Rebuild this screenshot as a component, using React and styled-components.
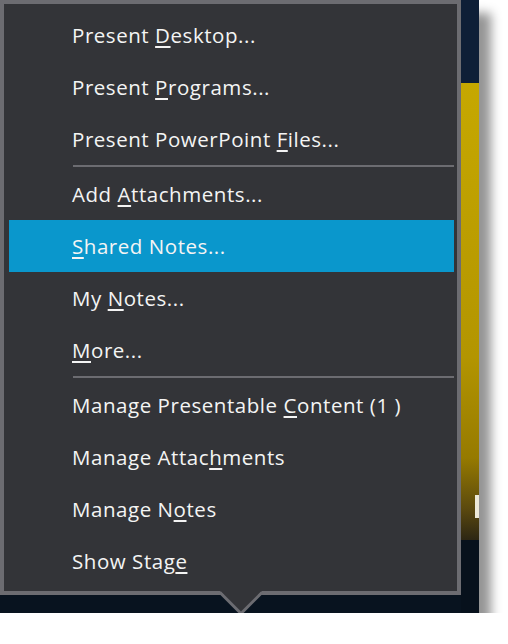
import React from "react";
import styled, { createGlobalStyle } from "styled-components";

const Global = createGlobalStyle`
  html, body { margin: 0; padding: 0; background: #ffffff; }
  body { font-family: "Open Sans", "Noto Sans", sans-serif; }
`;

const Backdrop = styled.div`
  display: flex;
  align-items: flex-start;
  width: 479px;
  height: 613px;
  background: #08131f;
  box-shadow: 12px 13px 10px rgba(0, 0, 0, 0.42);
`;

const Panel = styled.div`
  position: relative;
  box-sizing: border-box;
  width: 461px;
  height: 595px;
  border: 4px solid #6c6c71;
  background: #333438;
  padding: 5px 3px 4px 5px;
  display: flex;
  flex-direction: column;
`;

const Item = styled.div`
  display: flex;
  align-items: center;
  height: 52px;
  flex: none;
  padding-left: 63px;
  font-family: "Open Sans", "Noto Sans", sans-serif;
  font-size: 20.5px;
  font-weight: 500;
  letter-spacing: 0.55px;
  color: #f4f4f4;
  background: ${(p) => (p.$active ? "#0a97cc" : "transparent")};
  white-space: pre;
`;

const Key = styled.span`
  text-decoration: underline;
  text-decoration-thickness: 2px;
  text-underline-offset: 3px;
`;

const Separator = styled.div`
  flex: none;
  height: 3px;
  &::before {
    content: "";
    display: block;
    margin-left: 64px;
    height: 2px;
    background: #6c6c71;
  }
`;

const Pointer = styled.svg`
  position: absolute;
  left: 214px;
  top: 587px;
  display: block;
`;

const Strip = styled.div`
  width: 18px;
  height: 100%;
  display: flex;
  flex-direction: column;
  background: #0b1a2e;
`;

const StripTop = styled.div`
  height: 83px;
  flex: none;
  background: #0e1f37;
`;

const StripGold = styled.div`
  height: 457px;
  flex: none;
  display: flex;
  flex-direction: column;
  justify-content: flex-end;
  align-items: flex-end;
  padding-bottom: 22px;
  box-sizing: border-box;
  background: linear-gradient(
    to bottom,
    #c6a800 0%,
    #b39500 60%,
    #967a00 82%,
    #5c4a0e 93%,
    #2c2614 100%
  );
`;

const Glyph = styled.div`
  width: 4px;
  height: 23px;
  background: #ece8d8;
`;

const StripBottom = styled.div`
  flex: 1;
  background: #07111c;
`;

const Label = ({ text, k }) => (
  <span>
    {text.slice(0, k)}
    <Key>{text[k]}</Key>
    {text.slice(k + 1)}
  </span>
);

const groups = [
  [
    { text: "Present Desktop...", k: 8 },
    { text: "Present Programs...", k: 8 },
    { text: "Present PowerPoint Files...", k: 19 },
  ],
  [
    { text: "Add Attachments...", k: 4 },
    { text: "Shared Notes...", k: 0, active: true },
    { text: "My Notes...", k: 3 },
    { text: "More...", k: 0 },
  ],
  [
    { text: "Manage Presentable Content (1 )", k: 19 },
    { text: "Manage Attachments", k: 12 },
    { text: "Manage Notes", k: 8 },
    { text: "Show Stage", k: 9 },
  ],
];

export default function App() {
  return (
    <>
      <Global />
      <Backdrop>
        <Panel>
          {groups.map((g, gi) => (
            <React.Fragment key={gi}>
              {gi > 0 && <Separator />}
              {g.map((it) => (
                <Item key={it.text} $active={it.active}>
                  <Label text={it.text} k={it.k} />
                </Item>
              ))}
            </React.Fragment>
          ))}
          <Pointer width="46" height="26" viewBox="0 0 46 26">
            <polygon points="2,0 44,0 23,21" fill="#333438" />
            <polyline
              points="2,1.5 23,22.5 44,1.5"
              fill="none"
              stroke="#6c6c71"
              strokeWidth="3"
            />
          </Pointer>
        </Panel>
        <Strip>
          <StripTop />
          <StripGold>
            <Glyph />
          </StripGold>
          <StripBottom />
        </Strip>
      </Backdrop>
    </>
  );
}
